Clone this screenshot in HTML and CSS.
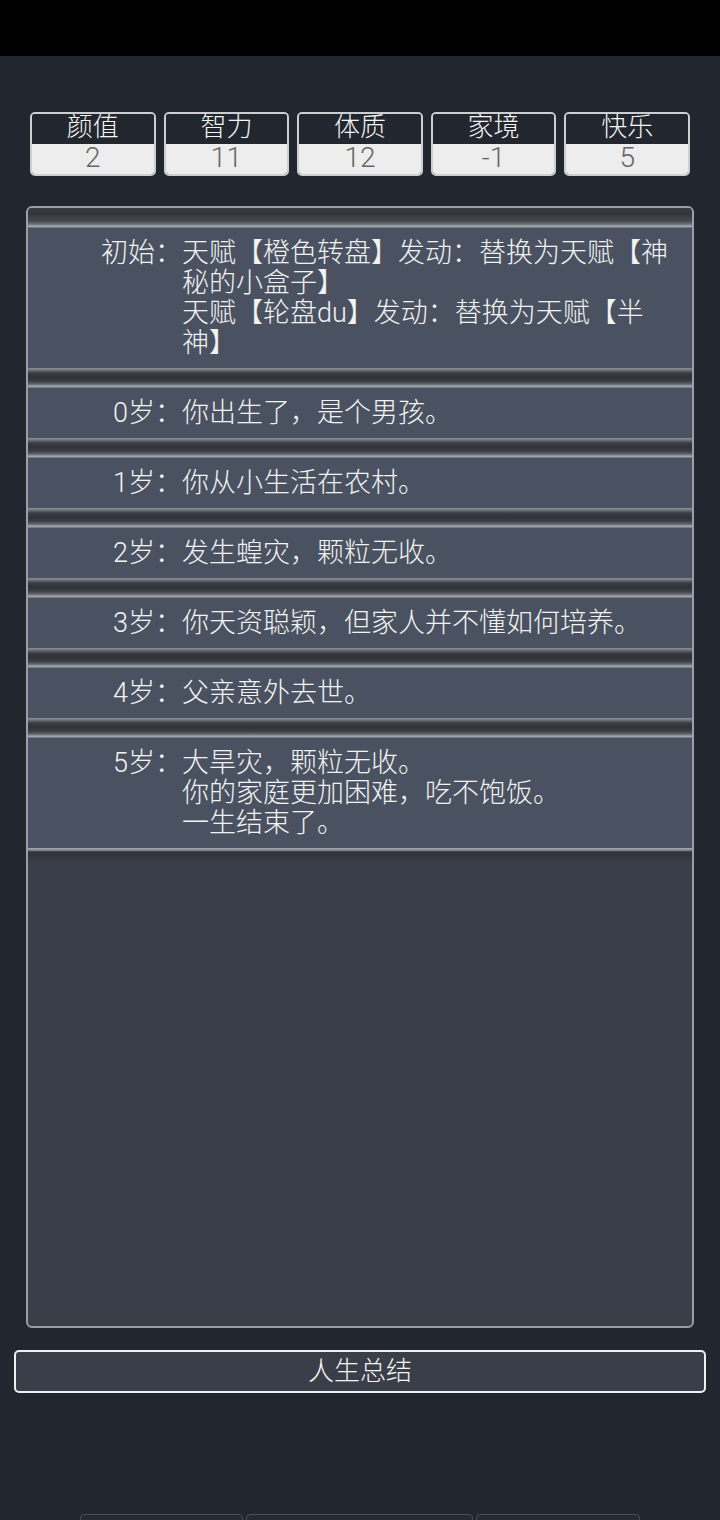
FILE: index.html
```html
<!DOCTYPE html>
<html lang="zh-CN">
<head>
<meta charset="utf-8">
<title>人生重开模拟器</title>
<link rel="stylesheet" href="styles.css">
</head>
<body>
<div class="statusbar"></div>
<div class="stats">
  <div class="stat"><div class="stat-label">颜值</div><div class="stat-value">2</div></div>
  <div class="stat"><div class="stat-label">智力</div><div class="stat-value">11</div></div>
  <div class="stat"><div class="stat-label">体质</div><div class="stat-value">12</div></div>
  <div class="stat"><div class="stat-label">家境</div><div class="stat-value">-1</div></div>
  <div class="stat"><div class="stat-label">快乐</div><div class="stat-value">5</div></div>
</div>
<div class="panel">
  <ul class="trajectory">
    <li class="entry"><span class="age">初始：</span><span class="text">天赋【橙色转盘】发动：替换为天赋【神秘的小盒子】<br>天赋【轮盘du】发动：替换为天赋【半神】</span></li>
    <li class="entry"><span class="age">0岁：</span><span class="text">你出生了，是个男孩。</span></li>
    <li class="entry"><span class="age">1岁：</span><span class="text">你从小生活在农村。</span></li>
    <li class="entry"><span class="age">2岁：</span><span class="text">发生蝗灾，颗粒无收。</span></li>
    <li class="entry"><span class="age">3岁：</span><span class="text">你天资聪颖，但家人并不懂如何培养。</span></li>
    <li class="entry"><span class="age">4岁：</span><span class="text">父亲意外去世。</span></li>
    <li class="entry"><span class="age">5岁：</span><span class="text">大旱灾，颗粒无收。<br>你的家庭更加困难，吃不饱饭。<br>一生结束了。</span></li>
  </ul>
</div>
<button class="summary">人生总结</button>
<div class="bottom-bar">
  <div class="bottom-btn b1"></div>
  <div class="bottom-btn b2"></div>
  <div class="bottom-btn b3"></div>
</div>
</body>
</html>
```
FILE: styles.css
```css
html, body {
  margin: 0;
  padding: 0;
}
body {
  background: #21262f;
  font-family: Roboto, "Noto Sans CJK SC", "Noto Sans", sans-serif;
  font-weight: 300;
  color: #eeeeee;
  width: 720px;
  height: 1520px;
  overflow: hidden;
}
.statusbar {
  height: 56px;
  background: #000000;
}
.stats {
  display: grid;
  grid-template-columns: repeat(5, 1fr);
  gap: 8px;
  margin: 56px 30px 0 30px;
}
.stat {
  border: 2px solid #cdced1;
  border-radius: 5px;
  overflow: hidden;
}
.stat-label {
  height: 30px;
  line-height: 26px;
  font-size: 26px;
  text-align: center;
  color: #f4f4f4;
  background: #21262f;
}
.stat-value {
  height: 30px;
  line-height: 27px;
  font-size: 28px;
  font-weight: 300;
  text-align: center;
  color: #666666;
  background: #ededed;
}
.panel {
  margin: 30px 26px 0 26px;
  height: 1118px;
  border: 2px solid #9a9ea5;
  border-radius: 6px;
  background: #3a3e48;
  overflow: hidden;
}
.trajectory {
  list-style: none;
  margin: 0;
  padding: 0;
}
.trajectory::after {
  content: "";
  display: block;
  height: 16px;
  background: linear-gradient(to bottom, #a2a6ac 0, #8c9096 2px, #2e3137 4px, #34373e 9px, #3a3e48 16px);
}
.entry {
  display: flex;
  padding: 30px 0 10px 0;
  font-size: 27px;
  line-height: 30px;
  background: linear-gradient(to bottom,
    #8e9298 0,
    #6f737a 2px,
    #3a3d43 5px,
    #2f3238 9px,
    #3b3e44 13px,
    #5f636a 16px,
    #9da1a7 18px,
    #a3a7ad 19px,
    #4a5261 20px,
    #4a5261 100%);
}
.entry:first-child {
  background: linear-gradient(to bottom,
    #3a3c42 0,
    #33363c 6px,
    #45484e 13px,
    #6a6e74 16px,
    #9da1a7 18px,
    #a3a7ad 19px,
    #4a5261 20px,
    #4a5261 100%);
}
.age {
  flex: 0 0 154px;
  text-align: right;
  color: #f2f2f2;
}
.text {
  flex: 1;
  padding-right: 12px;
  color: #f2f2f2;
}
.summary {
  display: block;
  box-sizing: border-box;
  width: 692px;
  height: 43px;
  margin: 22px 14px 0 14px;
  padding: 0;
  border: 2px solid #eeeff2;
  border-radius: 5px;
  background: #3a3e48;
  color: #f4f4f4;
  font-family: Roboto, "Noto Sans CJK SC", "Noto Sans", sans-serif;
  font-weight: 300;
  font-size: 26px;
  line-height: 35px;
  text-align: center;
}
.bottom-bar {
  display: flex;
  gap: 3px;
  margin: 121px 0 0 80px;
}
.bottom-btn {
  height: 40px;
  border: 1px solid #4a4e57;
  border-radius: 4px;
  background: #262a33;
  box-sizing: border-box;
}
.b1 { width: 163px; }
.b2 { width: 227px; }
.b3 { width: 164px; }
```
